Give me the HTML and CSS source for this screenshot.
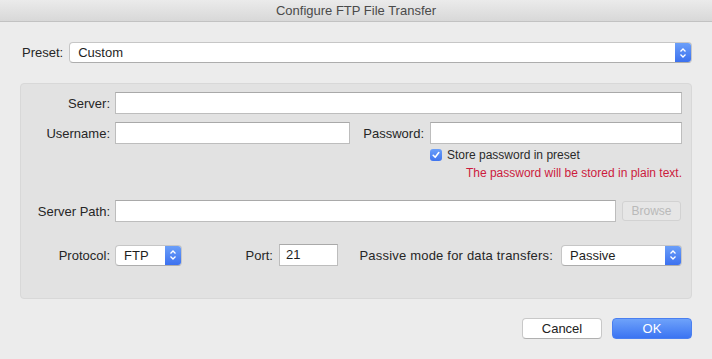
FILE: index.html
```html
<!DOCTYPE html>
<html lang="en">
<head>
    <meta charset="UTF-8">
    <title>Configure FTP File Transfer</title>
    <link rel="stylesheet" href="styles.css">
</head>
<body>
    <div class="window">
        <div class="titlebar">Configure FTP File Transfer</div>

        <div class="preset-row">
            <label class="lbl">Preset:</label>
            <div class="popup popup-wide">
                <span class="popup-text">Custom</span>
                <span class="stepper">
                    <svg width="8" height="12" viewBox="0 0 8 12"><path d="M1.5 4.5 L4 2 L6.5 4.5 M1.5 7.5 L4 10 L6.5 7.5" fill="none" stroke="#fff" stroke-width="1.3"/></svg>
                </span>
            </div>
        </div>

        <div class="group">
            <div class="row row-server">
                <label class="field-label">Server:</label>
                <div class="input grow"></div>
            </div>

            <div class="row row-user">
                <label class="field-label">Username:</label>
                <div class="input input-user"></div>
                <label class="pass-label">Password:</label>
                <div class="input grow"></div>
            </div>

            <div class="check-row">
                <span class="checkbox">
                    <svg width="12" height="12" viewBox="0 0 12 12"><path d="M3.2 6.3 L5.2 8.3 L8.8 3.6" fill="none" stroke="#fff" stroke-width="1.6" stroke-linecap="round" stroke-linejoin="round"/></svg>
                </span>
                <span class="check-text">Store password in preset</span>
            </div>

            <div class="warning">The password will be stored in plain text.</div>

            <div class="row row-path">
                <label class="field-label">Server Path:</label>
                <div class="input grow"></div>
                <button class="btn-browse" disabled>Browse</button>
            </div>

            <div class="row row-proto">
                <label class="field-label">Protocol:</label>
                <div class="popup popup-proto">
                    <span class="popup-text">FTP</span>
                    <span class="stepper">
                        <svg width="8" height="12" viewBox="0 0 8 12"><path d="M1.5 4.5 L4 2 L6.5 4.5 M1.5 7.5 L4 10 L6.5 7.5" fill="none" stroke="#fff" stroke-width="1.3"/></svg>
                    </span>
                </div>
                <label class="port-label">Port:</label>
                <div class="input input-port">21</div>
                <label class="passive-label">Passive mode for data transfers:</label>
                <div class="popup popup-passive">
                    <span class="popup-text">Passive</span>
                    <span class="stepper">
                        <svg width="8" height="12" viewBox="0 0 8 12"><path d="M1.5 4.5 L4 2 L6.5 4.5 M1.5 7.5 L4 10 L6.5 7.5" fill="none" stroke="#fff" stroke-width="1.3"/></svg>
                    </span>
                </div>
            </div>
        </div>

        <div class="buttons">
            <button class="btn btn-cancel">Cancel</button>
            <button class="btn btn-ok">OK</button>
        </div>
    </div>
</body>
</html>
```

FILE: styles.css
```css
* {
    box-sizing: border-box;
}

body {
    margin: 0;
    background-color: #ececec;
    font-family: "Liberation Sans", Arial, sans-serif;
    font-size: 13px;
    color: #262626;
}

.window {
    width: 712px;
    height: 359px;
    background-color: #ececec;
}

.titlebar {
    height: 22px;
    line-height: 21px;
    text-align: center;
    color: #4a4a4a;
    background: linear-gradient(#ebebeb, #d8d8d8);
    border-bottom: 1px solid #c2c2c2;
}

/* preset */

.preset-row {
    display: flex;
    align-items: center;
    margin-top: 20px;
    padding-left: 22px;
    padding-right: 20px;
}

.lbl {
    margin-right: 6px;
}

.popup {
    display: flex;
    height: 21px;
    background-color: #fff;
    border: 1px solid #c6c6c6;
    border-bottom-color: #adadad;
    border-radius: 4px;
    overflow: hidden;
}

.popup-wide {
    flex: 1;
}

.popup-text {
    flex: 1;
    padding-left: 8px;
    line-height: 19px;
    color: #1e1e1e;
}

.stepper {
    width: 16px;
    display: flex;
    align-items: center;
    justify-content: center;
    background: linear-gradient(#6b9ff9, #3c71ef);
}

/* group box */

.group {
    margin: 20px 0 0 20px;
    width: 672px;
    height: 216px;
    background-color: #e2e2e2;
    border: 1px solid #d8d8d8;
    border-radius: 4px;
    padding-right: 9px;
}

.row {
    display: flex;
    align-items: center;
}

.field-label {
    width: 89px;
    text-align: right;
    margin-right: 5px;
    flex-shrink: 0;
}

.input {
    height: 22px;
    background-color: #fff;
    border: 1px solid #bdbdbd;
    border-top-color: #a9a9a9;
    padding-left: 5px;
    line-height: 20px;
    color: #1e1e1e;
}

.grow {
    flex: 1;
}

.row-server {
    margin-top: 8px;
}

.row-user {
    margin-top: 8px;
}

.input-user {
    width: 235px;
}

.pass-label {
    width: 74px;
    text-align: right;
    margin-right: 6px;
}

.check-row {
    display: flex;
    align-items: center;
    margin-top: 4px;
    padding-left: 409px;
    font-size: 12px;
}

.checkbox {
    width: 12px;
    height: 12px;
    border-radius: 3px;
    background: linear-gradient(#6b9ff9, #3f74ef);
    display: flex;
    margin-right: 5px;
}

.check-text {
    color: #2a2a2a;
}

.warning {
    margin-top: 4px;
    text-align: right;
    font-size: 12px;
    color: #cc1b3d;
}

.row-path {
    margin-top: 20px;
}

.btn-browse {
    width: 59px;
    height: 20px;
    margin-left: 6px;
    margin-right: 1px;
    font-family: inherit;
    font-size: 12px;
    color: #b9b9b9;
    background-color: #e6e6e6;
    border: 1px solid #d2d2d2;
    border-radius: 3px;
}

.row-proto {
    margin-top: 22px;
}

.popup-proto {
    width: 67px;
}

.port-label {
    width: 91px;
    text-align: right;
    margin-right: 6px;
}

.input-port {
    width: 59px;
    padding-left: 6px;
}

.passive-label {
    width: 215px;
    text-align: right;
    margin-right: 8px;
    letter-spacing: 0.2px;
}

.popup-passive {
    flex: 1;
}

/* buttons */

.buttons {
    display: flex;
    justify-content: flex-end;
    gap: 10px;
    margin-top: 19px;
    padding-right: 20px;
}

.btn {
    width: 80px;
    height: 21px;
    font-family: inherit;
    font-size: 13px;
    border-radius: 4px;
    padding: 0;
}

.btn-cancel {
    background-color: #fff;
    border: 1px solid #c8c8c8;
    border-bottom-color: #b0b0b0;
    color: #222;
}

.btn-ok {
    background: linear-gradient(#6ea2fa, #3b74f2);
    border: 1px solid #4a7ff0;
    color: #fff;
}
```
